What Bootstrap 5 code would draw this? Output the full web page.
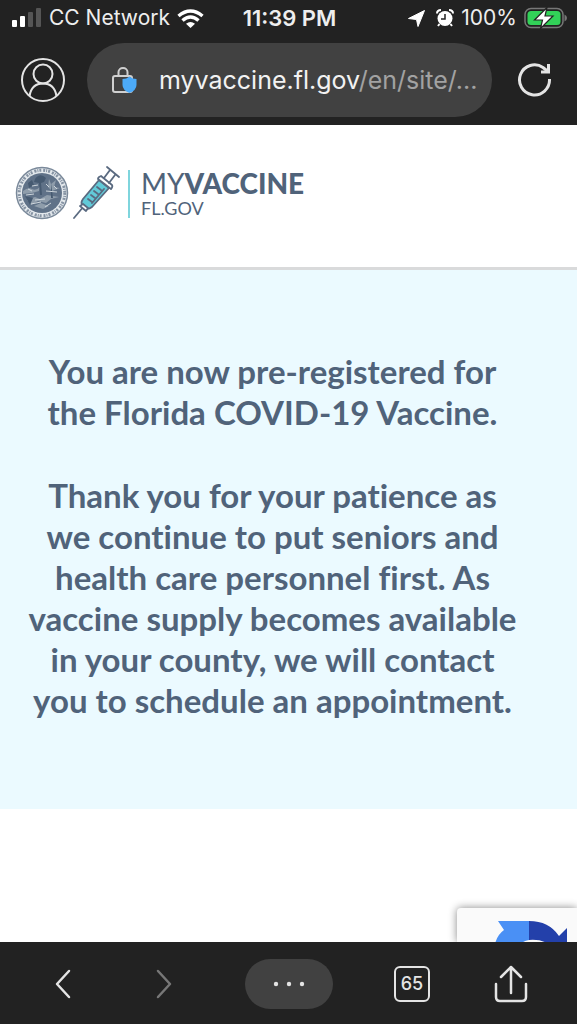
<!DOCTYPE html>
<html lang="en">
<head>
<meta charset="utf-8">
<meta name="viewport" content="width=device-width, initial-scale=1">
<title>MyVaccine FL.gov</title>
<link rel="stylesheet" href="https://cdn.jsdelivr.net/npm/bootstrap@5.3.0/dist/css/bootstrap.min.css">
<style>
  :root { --chrome: #222; --pill: #414141; --ink: #e4e4e4; --slate: #50637a; }
  body { font-family: Inter, "Liberation Sans", sans-serif; background: #fff; }
  svg { display: block; flex: none; }
  .browser-chrome { background: var(--chrome); color: var(--ink); }
  .status { height: 36px; font-size: 21px; line-height: 36px; color: #eee; padding: 0 10px 0 12px; }
  .status-side { flex: 1 1 0; gap: 7px; }
  .clock { font-size: 22px; }
  .address-row { padding: 7px 24px 8px 20px; gap: 21px; }
  .address { height: 74px; background: var(--pill); color: #f2f2f2; font-size: 25px; padding: 2px 8px 0 24px; gap: 22px; }
  .dim { color: #a2a2a2; }
  .icon-btn { background: none; border: 0; padding: 0; color: var(--ink); }
  .site-header { height: 145px; border-bottom: 3px solid #d9dadb; padding: 41px 15px 0; }
  .brand { color: var(--slate); font-family: Lato, sans-serif; }
  .brand-words { border-left: 2px solid #7fd5dd; height: 48px; padding-left: 11px; margin: 4px 0 0 8px; }
  .brand-top { font-size: 28px; line-height: 27px; }
  .brand-top strong { font-weight: 900; }
  .brand-sub { font-size: 18px; line-height: 22px; }
  .notice { background: #ebfaff; color: var(--slate); font-family: Lato, sans-serif; font-weight: 700; font-variant-ligatures: no-common-ligatures; padding: 81px 56px 88px 24px; }
  .notice p { font-size: 33px; line-height: 41px; margin: 0 0 42px; }
  .notice p:last-child { margin: 0; }
  .captcha { right: 0; bottom: 0; width: 120px; height: 34px; background: #fafafa; border-radius: 4px 0 0 0; box-shadow: 0 0 8px #888; }
  .captcha svg { margin: 12px 0 0 38px; }
  .toolbar { height: 82px; padding: 2px 46px 0 43px; }
  .tool { width: 40px; display: flex; justify-content: center; }
  .more { width: 88px; height: 50px; background: var(--pill); color: var(--ink); }
  .tabs { width: 36px; height: 36px; border: 2px solid var(--ink); border-radius: 6px; font-size: 18px; line-height: 32px; font-weight: 500; }
</style>
</head>
<body>
<div class="vh-100 d-flex flex-column overflow-hidden">
  <header class="browser-chrome">
    <div class="status d-flex align-items-center">
      <div class="status-side d-flex align-items-center">
        <svg width="30" height="20" viewBox="0 0 30 20"><rect x="0" y="12" width="5" height="7" rx="1" fill="#fff"/><rect x="8" y="8" width="5" height="11" rx="1" fill="#fff"/><rect x="16" y="4" width="5" height="15" rx="1" fill="#555"/><rect x="24" y="0" width="5" height="19" rx="1" fill="#555"/></svg>
        <span class="text-nowrap">CC Network</span>
        <svg width="27" height="19" viewBox="0 0 27 19" fill="none" stroke="#fff" stroke-width="3.500"><path d="M1.500 7Q13.500-3 25.500 7M5.500 11.500Q13.500 4.500 21.500 11.500"/><path d="M9 14.800Q13.500 11 18 14.800L13.500 19Z" fill="#fff" stroke="none"/></svg>
      </div>
      <span class="clock fw-semibold text-nowrap">11:39 PM</span>
      <div class="status-side d-flex align-items-center justify-content-end">
        <svg width="17" height="17" viewBox="0 0 17 17"><path d="M16.500.5L10 16.500 8.500 9.500.5 8.500Z" fill="#fff" stroke="#fff" stroke-linejoin="round"/></svg>
        <svg class="ms-1" width="18" height="18" viewBox="0 0 18 18"><circle cx="9" cy="9.500" r="7.500" fill="#fff"/><path d="M1 4.500Q1 1 5 1M17 4.500Q17 1 13 1M3.500 15L2 17M14.500 15L16 17" stroke="#fff" stroke-width="2" fill="none"/><path d="M9 5v5H5" stroke="#222" stroke-width="1.500" fill="none"/></svg>
        <span>100%</span>
        <svg width="43" height="22" viewBox="0 0 43 22"><rect x="1" y="1.500" width="38" height="19" rx="6" fill="none" stroke="#777" stroke-width="1.500"/><rect x="3.500" y="4" width="33" height="14" rx="3.500" fill="#32d158"/><path d="M40.500 7.500Q43 8.500 43 11T40.500 14.500Z" fill="#777"/><path d="M23 .5L10.500 13h8L16.500 21.500 29 9h-8Z" fill="#fff" stroke="#222" stroke-width="1.200"/></svg>
      </div>
    </div>
    <div class="address-row d-flex align-items-center">
      <button class="icon-btn" type="button" aria-label="Profile">
        <svg width="46" height="46" viewBox="0 0 46 46" fill="none" stroke="currentColor" stroke-width="2"><circle cx="23" cy="23" r="21"/><circle cx="23" cy="17" r="9.500"/><path d="M9.500 39C11 30 16 26.500 23 26.500S35 30 36.500 39"/></svg>
      </button>
      <button class="address btn rounded-pill border-0 flex-grow-1 d-flex align-items-center overflow-hidden" type="button">
        <svg width="26" height="28" viewBox="0 0 26 28"><rect x="2" y="9" width="19" height="16" rx="2" fill="none" stroke="#d0d0d0" stroke-width="2"/><path d="M7.500 9V5a4.500 4 0 0 1 9 0v4" fill="none" stroke="#d0d0d0" stroke-width="2"/><path d="M18.500 9.500Q21.500 12 25.500 12v6q0 5-7 8-7-3-7-8v-6q4 0 7-2.500Z" fill="#4caaf8"/></svg>
        <span class="text-nowrap">myvaccine.fl.gov<span class="dim">/en/site/...</span></span>
      </button>
      <button class="icon-btn ms-1" type="button" aria-label="Reload">
        <svg width="36" height="36" viewBox="0 0 36 36" fill="none" stroke="currentColor" stroke-width="3"><path d="M32.500 17A15 15 0 1 1 26 5.500L31 9.500"/><path d="M31.500 2v8H24"/></svg>
      </button>
    </div>
  </header>

  <main class="position-relative flex-grow-1 overflow-hidden">
    <div class="site-header">
      <a class="brand d-inline-flex text-decoration-none" href="#">
        <svg width="54" height="54" viewBox="0 0 54 54"><circle cx="27" cy="27" r="25.500" fill="#e3e8ec" stroke="#7a899a" stroke-width="1.500"/><circle cx="27" cy="27" r="22.800" fill="none" stroke="#8794a4" stroke-width="3" stroke-dasharray="2 1 1 1 2 2"/><circle cx="27" cy="27" r="20" fill="#607288"/><path d="M8 25q5-4 9-2t8-2l-1 4-7 2-9 1ZM34 13l2 5 5-4-2 7 6 1-8 3-4-4ZM12 34l8-3 5 2 7-4 12 2-8 2-5 4-8-2-7 4ZM19 40l7-3 8 3-6 3Z" fill="#8f9dab"/><path d="M20 13q5-7 11-1l-2 4-3 1 1 12h-2l-1-12-5-1ZM36 17l2 15h-2ZM13 17l4-3 2 5-5 3ZM10 30l8 2-3 7Z" fill="#465a71"/><path d="M11 29l8-1m12-3l11 1M20 34l10-1M16 38l10-2m4 5l6-4M31 18l3 3M17 20l6-1M13 23l4 2M39 20l3 3" stroke="#cdd5db" stroke-width="1"/></svg>
        <svg class="ms-1" width="47" height="54" viewBox="0 0 47 54" fill="none" stroke="#5a6a80" stroke-width="1.800" stroke-linejoin="round" stroke-linecap="round"><path d="M1 52L11 40"/><path d="M26 14L10 33q-3 4 0 7l2 2q3 2 7-1L36 22Z" fill="#62cad8"/><path d="M28 10l11 9q1 2-1 4L25 13q0-2 3-3ZM10 38l5 4-2 3-6-5Z" fill="#fff"/><path d="M31 12l6-8M36 17l6-8M34 1l12 10"/><path d="M24 21l4 3M21 25l4 3M18 29l4 3M15 33l4 3M31 23L19 37"/></svg>
        <span class="brand-words d-flex flex-column">
          <span class="brand-top text-nowrap">MY<strong>VACCINE</strong></span>
          <span class="brand-sub">FL.GOV</span>
        </span>
      </a>
    </div>
    <section class="notice text-center">
      <p>You are now pre-registered for the Florida COVID-19 Vaccine.</p>
      <p>Thank you for your patience as we continue to put seniors and health care personnel first. As vaccine supply becomes available in your county, we will contact you to schedule an appointment.</p>
    </section>
    <div class="captcha position-absolute overflow-hidden" role="img" aria-label="reCAPTCHA">
      <svg width="74" height="64" viewBox="0 0 74 64"><path d="M3 1h31v19q-8 1-12 9L0 24q2-9 9-14Z" fill="#4a90f5"/><path d="M34 1q20 0 30 15l8-8v25H45l9-8q-6-6-20-5Z" fill="#2340aa"/></svg>
    </div>
  </main>

  <nav class="browser-chrome toolbar d-flex align-items-center justify-content-between" aria-label="Browser toolbar">
    <button class="icon-btn tool" type="button" aria-label="Back"><svg width="18" height="30" viewBox="0 0 18 30" fill="none" stroke="currentColor" stroke-width="2.500" stroke-linecap="round" stroke-linejoin="round"><path d="M15 2L3 15l12 13"/></svg></button>
    <button class="icon-btn tool" type="button" aria-label="Forward" disabled><svg width="18" height="30" viewBox="0 0 18 30" fill="none" stroke="#777" stroke-width="2.500" stroke-linecap="round" stroke-linejoin="round"><path d="M3 2l12 13L3 28"/></svg></button>
    <button class="more btn border-0 rounded-pill p-0 d-flex align-items-center justify-content-center" type="button" aria-label="More"><svg width="32" height="6" viewBox="0 0 32 6" fill="currentColor"><circle cx="3" cy="3" r="2.200"/><circle cx="16" cy="3" r="2.200"/><circle cx="29" cy="3" r="2.200"/></svg></button>
    <button class="icon-btn tabs" type="button">65</button>
    <button class="icon-btn tool" type="button" aria-label="Share"><svg width="34" height="38" viewBox="0 0 34 38" fill="none" stroke="currentColor" stroke-width="2.500" stroke-linecap="round" stroke-linejoin="round"><path d="M17 28V2M7 12L17 2l10 10M2 19v13q0 4 4 4h22q4 0 4-4V19"/></svg></button>
  </nav>
</div>
<script src="https://cdn.jsdelivr.net/npm/bootstrap@5.3.0/dist/js/bootstrap.bundle.min.js"></script>
</body>
</html>
